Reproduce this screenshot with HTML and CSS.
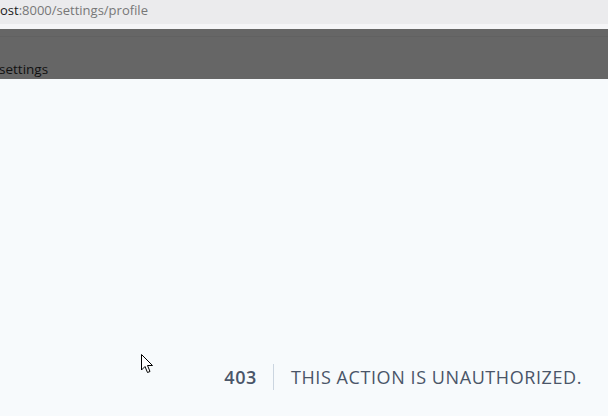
FILE: index.html
```html
<!DOCTYPE html>
<html lang="en">
<head>
    <meta charset="UTF-8">
    <title>Forbidden</title>
    <link rel="stylesheet" href="styles.css">
</head>
<body>
    <!-- Browser address bar -->
    <div class="address-bar"><span class="host">ost</span>:8000/settings/profile</div>
    <div class="tab-strip"></div>

    <!-- App header -->
    <header class="app-header">
        <div class="header-line"></div>
        <div class="header-title">settings</div>
    </header>

    <!-- Error message -->
    <main class="error-page">
        <div class="error-box">
            <div class="error-code">403</div>
            <div class="error-message">This action is unauthorized.</div>
        </div>
        <svg class="cursor" width="13" height="20" viewBox="0 0 13 20">
            <path d="M0.5 0.5 L0.5 16 L4 12.5 L6.5 18.5 L9 17.5 L6.5 11.5 L11.5 11.5 Z" fill="#fff" stroke="#000" stroke-width="1"/>
        </svg>
    </main>
</body>
</html>
```

FILE: styles.css
```css
body {
    margin: 0;
    font-family: "Open Sans", "Noto Sans", sans-serif;
    background-color: #f7fafc;
    height: 416px;
    overflow: hidden;
}

/* Address bar */
.address-bar {
    height: 24px;
    background-color: #ebebed;
    color: #777;
    font-size: 13px;
    line-height: 20px;
    white-space: nowrap;
}
.address-bar .host { color: #1a1a1a; }

.tab-strip {
    height: 5px;
    background-color: #f5f5f7;
}

/* Header */
.app-header {
    height: 50px;
    background-color: #666;
    display: flex;
    flex-direction: column;
}
.header-line {
    height: 7px;
    border-bottom: 1px solid #616161;
}
.header-title {
    margin-top: 24px;
    margin-left: -1px;
    font-size: 13.5px;
    line-height: 16px;
    color: #111;
}

/* Error message */
.error-page {
    position: relative;
    height: 337px;
    display: flex;
    justify-content: flex-end;
    align-items: flex-end;
    padding-right: 26px;
    padding-bottom: 26px;
    box-sizing: border-box;
}
.error-box {
    display: flex;
    align-items: center;
    color: #4a5568;
    font-size: 18px;
    letter-spacing: 0.58px;
}
.error-code {
    font-weight: 600;
    padding-right: 16px;
    border-right: 1px solid #cbd5e0;
    line-height: 26px;
}
.error-message {
    margin-left: 17px;
    text-transform: uppercase;
    line-height: 26px;
}

.cursor {
    position: absolute;
    left: 141px;
    top: 275px;
}
```
